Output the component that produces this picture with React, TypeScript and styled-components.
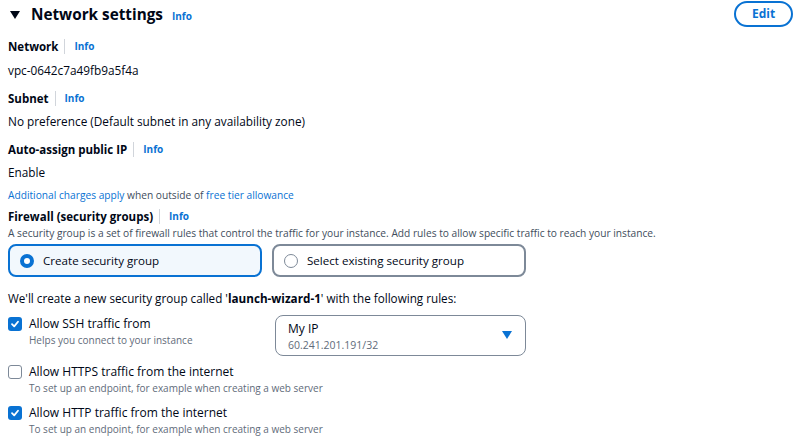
import styled, { createGlobalStyle } from 'styled-components';

const GlobalStyle = createGlobalStyle`
  body {
    margin: 0;
    background: #fff;
    font-family: 'Open Sans', 'Noto Sans', sans-serif;
    color: #000716;
  }
`;

const BLUE = '#0972d3';

const Root = styled.div`
  width: 800px;
  height: 441px;
  overflow: hidden;
  padding: 0 8px;
  box-sizing: border-box;
`;

const Header = styled.div`
  display: flex;
  align-items: center;
  justify-content: space-between;
  height: 28px;
`;

const Title = styled.h2`
  display: flex;
  align-items: center;
  margin: 0;
  font-size: 15.3px;
  font-weight: 700;
`;

const Caret = styled.svg`
  width: 10px;
  height: 8px;
  margin: 1px 11px 0 2px;
`;

const TitleInfo = styled.a`
  font-size: 10px;
  font-weight: 700;
  color: ${BLUE};
  margin-left: 9px;
  margin-top: 3px;
`;

const EditButton = styled.button`
  font-family: inherit;
  font-size: 12px;
  font-weight: 700;
  color: ${BLUE};
  background: #fff;
  border: 2px solid ${BLUE};
  border-radius: 20px;
  width: 59px;
  height: 26px;
  margin-right: -1px;
  margin-top: -1px;
  padding: 0;
`;

const Label = styled.div<{ $top: number }>`
  display: flex;
  align-items: center;
  margin-top: ${(p) => p.$top}px;
  height: 20px;
  font-size: 11.5px;
  font-weight: 700;
`;

const Divider = styled.span`
  width: 1px;
  height: 15px;
  background: #d1d5db;
  margin: 0 9px 0 6px;
`;

const Info = styled.a`
  font-size: 10px;
  font-weight: 700;
  color: ${BLUE};
`;

const Value = styled.div<{ $top?: number }>`
  margin-top: ${(p) => p.$top ?? 4}px;
  height: 20px;
  line-height: 20px;
  font-size: 11.8px;
`;

const Note = styled.div`
  margin-top: 4px;
  line-height: 18px;
  font-size: 10.2px;
  color: #414d5c;
`;

const Link = styled.a`
  color: ${BLUE};
`;

const Description = styled.div`
  line-height: 14px;
  font-size: 10.2px;
  color: #414d5c;
  white-space: nowrap;
`;

const Tiles = styled.div`
  display: flex;
  gap: 10px;
  margin-top: 4px;
`;

const Tile = styled.div<{ $selected?: boolean }>`
  display: flex;
  align-items: center;
  gap: 9px;
  box-sizing: border-box;
  width: 254px;
  height: 33px;
  padding: 0 10px;
  border: 2px solid ${(p) => (p.$selected ? BLUE : '#7d8998')};
  border-radius: 8px;
  background: ${(p) => (p.$selected ? '#f2f8fd' : '#fff')};
  font-size: 11.6px;
`;

const Radio = styled.span<{ $checked?: boolean }>`
  box-sizing: border-box;
  width: 14px;
  height: 14px;
  border-radius: 50%;
  border: ${(p) => (p.$checked ? `4px solid ${BLUE}` : '1.5px solid #7d8998')};
  background: #fff;
  flex: none;
`;

const Intro = styled.div`
  margin-top: 11px;
  line-height: 20px;
  font-size: 11.7px;
`;

const RuleRow = styled.div<{ $top: number }>`
  display: flex;
  align-items: flex-start;
  margin-top: ${(p) => p.$top}px;
`;

const RuleCheck = styled.div`
  display: flex;
  gap: 7px;
  width: 267px;
  flex: none;
`;

const Box = styled.span<{ $checked?: boolean }>`
  box-sizing: border-box;
  display: flex;
  align-items: center;
  justify-content: center;
  width: 14px;
  height: 14px;
  margin-top: 3px;
  border-radius: 3px;
  background: ${(p) => (p.$checked ? BLUE : '#fff')};
  border: ${(p) => (p.$checked ? 'none' : '1.5px solid #7d8998')};
  flex: none;
`;

const RuleText = styled.div`
  display: flex;
  flex-direction: column;
  white-space: nowrap;
`;

const RuleTitle = styled.span`
  font-size: 12px;
  line-height: 20px;
`;

const RuleHelp = styled.span`
  font-size: 10px;
  line-height: 13px;
  color: #5f6b7a;
`;

const Select = styled.div`
  position: relative;
  box-sizing: border-box;
  width: 251px;
  height: 41px;
  margin-top: 1px;
  padding: 4px 12px;
  border: 1.5px solid #7d8998;
  border-radius: 8px;
  display: flex;
  flex-direction: column;
`;

const SelectMain = styled.span`
  font-size: 12px;
  line-height: 18px;
`;

const SelectSub = styled.span`
  font-size: 10.5px;
  line-height: 14px;
  color: #5f6b7a;
`;

const SelectCaret = styled.svg`
  position: absolute;
  right: 13px;
  top: 15px;
  width: 10px;
  height: 8px;
`;

const Check = () => (
  <svg width="10" height="10" viewBox="0 0 10 10">
    <path d="M2 5.2 L4.2 7.4 L8 2.8" fill="none" stroke="#fff" strokeWidth="1.8" strokeLinecap="round" strokeLinejoin="round" />
  </svg>
);

const FieldLabel = ({ text, top }: { text: string; top: number }) => (
  <Label $top={top}>
    {text}
    <Divider />
    <Info>Info</Info>
  </Label>
);

const rules = [
  { title: 'Allow SSH traffic from', help: 'Helps you connect to your instance', checked: true, top: 6 },
  { title: 'Allow HTTPS traffic from the internet', help: 'To set up an endpoint, for example when creating a web server', checked: false, top: 6 },
  { title: 'Allow HTTP traffic from the internet', help: 'To set up an endpoint, for example when creating a web server', checked: true, top: 8 },
];

export default function App() {
  return (
    <Root>
      <GlobalStyle />
      <Header>
        <Title>
          <Caret viewBox="0 0 10 8">
            <polygon points="0,0 10,0 5,8" fill="#000716" />
          </Caret>
          Network settings
          <TitleInfo>Info</TitleInfo>
        </Title>
        <EditButton>Edit</EditButton>
      </Header>

      <FieldLabel text="Network" top={8} />
      <Value>vpc-0642c7a49fb9a5f4a</Value>

      <FieldLabel text="Subnet" top={8} />
      <Value $top={3}>No preference (Default subnet in any availability zone)</Value>

      <FieldLabel text="Auto-assign public IP" top={8} />
      <Value $top={3}>Enable</Value>
      <Note>
        <Link>Additional charges apply</Link> when outside of <Link>free tier allowance</Link>
      </Note>

      <FieldLabel text="Firewall (security groups)" top={2} />
      <Description>
        A security group is a set of firewall rules that control the traffic for your instance. Add rules to allow specific traffic to reach your instance.
      </Description>

      <Tiles>
        <Tile $selected>
          <Radio $checked />
          Create security group
        </Tile>
        <Tile>
          <Radio />
          Select existing security group
        </Tile>
      </Tiles>

      <Intro>
        We'll create a new security group called '<b>launch-wizard-1</b>' with the following rules:
      </Intro>

      {rules.map((r, i) => (
        <RuleRow key={r.title} $top={r.top}>
          <RuleCheck>
            <Box $checked={r.checked}>{r.checked && <Check />}</Box>
            <RuleText>
              <RuleTitle>{r.title}</RuleTitle>
              <RuleHelp>{r.help}</RuleHelp>
            </RuleText>
          </RuleCheck>
          {i === 0 && (
            <Select>
              <SelectMain>My IP</SelectMain>
              <SelectSub>60.241.201.191/32</SelectSub>
              <SelectCaret viewBox="0 0 10 8">
                <polygon points="0,0 10,0 5,8" fill={BLUE} />
              </SelectCaret>
            </Select>
          )}
        </RuleRow>
      ))}
    </Root>
  );
}
